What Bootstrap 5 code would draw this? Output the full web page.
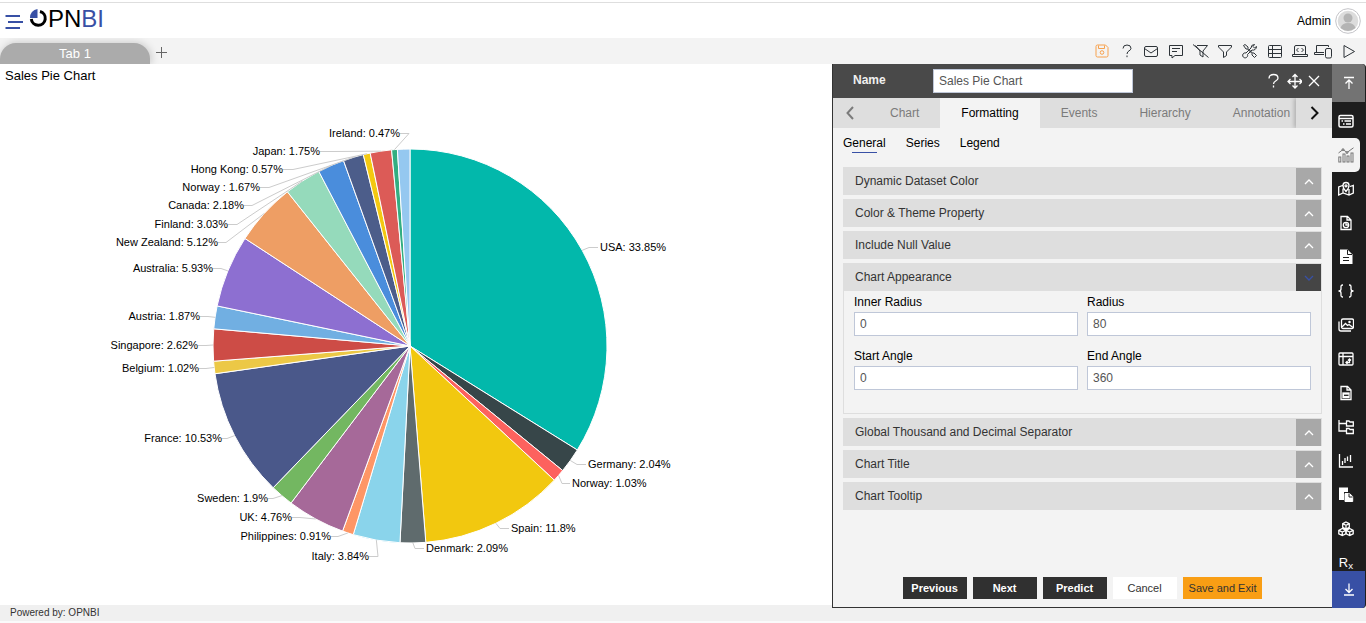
<!DOCTYPE html>
<html lang="en">
<head>
<meta charset="utf-8">
<meta name="viewport" content="width=device-width, initial-scale=1">
<title>OPNBI</title>
<link href="https://cdn.jsdelivr.net/npm/bootstrap@5.3.0/dist/css/bootstrap.min.css" rel="stylesheet">
<style>
  :root { --brand: #3850a5; --bar: #f3f3f3; --line: #dedede; --dark: #494949; --ink: #333; }
  body { font-family: "Liberation Sans", Arial, sans-serif; font-size: 12px; line-height: 18px; color: #000; background: #fafafa; }
  button, input { font: inherit; }
  svg.ico { width: 16px; height: 16px; fill: none; stroke: currentColor; stroke-width: 1; display: block; flex: none; }
  svg.bold-ico { stroke-width: 2; }
  svg.mid-ico { stroke-width: 1.3; }
  .plain { border: 0; background: none; padding: 0; color: inherit; }

  .app-header { height: 36px; border-top: 1px solid var(--line); margin-top: 2px; background: #fff; padding: 0 5px; }
  .top-strip { background: #fff; }
  .burger { color: var(--brand); margin: 0 6px 0 0; }
  .burger svg.ico { width: 18px; height: 16px; stroke-width: 2; }
  .brand { font-size: 24px; line-height: 24px; color: #000; text-decoration: none; margin-bottom: 4px; }
  .brand svg { width: 19px; height: 19px; }
  .brand span { color: var(--brand); }
  .avatar { width: 26px; height: 26px; }

  .tool-row { height: 26px; background: var(--bar); }
  .sheet-tab { width: 150px; height: 21px; border-radius: 16px 16px 0 0; background: #ababab; color: #fff; font-size: 13px; box-shadow: 1px 0 8px rgba(0,0,0,.2); }
  .sheet-tabs { overflow: hidden; padding-right: 20px; color: #666; }
  .tools { width: 263px; margin-right: 9px; color: #2d3338; }
  .tools .saving { color: #f7a14c; }

  .work-area { min-height: 0; }
  .chart-pane { background: #fff; min-width: 0; }
  .chart-pane h1 { font-size: 13px; line-height: 16px; margin: 0; padding: 4px 5px; }
  .chart-pane svg { font-size: 11px; margin-top: -24px; min-height: 0; }

  .editor { width: 500px; background: var(--bar); border: solid var(--ink); border-width: 0 0 1px 1px; margin-bottom: -3px; z-index: 1; }
  .editor-head { height: 34px; background: var(--dark); color: #fff; padding: 0 10px 0 20px; }
  .editor-head label { width: 80px; font-weight: bold; color: #f0f0f0; padding-bottom: 3px; }
  .field { height: 24px; border: 1px solid #bfc7d8; border-radius: 0; background: #fff; color: #555; padding: 0 5px; font-size: 12px; }
  .field-name { width: 200px; }

  .tab-strip { height: 30px; background: var(--line); color: #7b7b7b; }
  .tab-strip .arrow { width: 36px; flex: none; background: var(--line); }
  .tab-strip .next { color: #111; box-shadow: -2px 0 4px rgba(0,0,0,.2); z-index: 1; }
  .tab-strip a { color: inherit; text-decoration: none; padding: 0 21px; line-height: 30px; }
  .tab-strip a.active { background: var(--bar); color: #000; }
  .sub-nav { gap: 20px; padding: 6px 10px 13px; }
  .sub-nav a { color: #000; text-decoration: none; line-height: 18px; padding-bottom: 1px; }
  .sub-nav a.active::after { content: ""; display: block; height: 1px; width: 25px; margin: 0 auto; background: var(--brand); }

  .groups { gap: 4px; padding: 0 10px; }
  .group { border: 1px solid var(--line); border-bottom: 0; }
  .group.open { border-bottom: 1px solid var(--line); }
  .group-head { height: 27px; background: var(--line); color: var(--ink); padding-left: 11px; text-align: left; }
  .group-head span { padding-bottom: 2px; }
  .group-head i { width: 25px; background: #a8a8a8; color: #fff; }
  .open .group-head i { background: #454545; color: var(--brand); }
  .group-head svg.ico { width: 12px; height: 12px; stroke-width: 1.3; }
  .group-body { display: grid; grid-template-columns: 1fr 1fr; gap: 11px 9px; padding: 2px 10px 23px; }
  .group-body label { display: block; line-height: 18px; margin-bottom: 1px; }
  .actions { gap: 6px; padding-bottom: 8px; font-size: 11px; }
  .actions button { border: 0; height: 22px; min-width: 64px; padding: 0 6px; color: var(--ink); background: #fff; }
  .actions .step { background: #303030; color: #fff; font-weight: bold; }
  .actions .done { background: #f99e14; }

  .rail { width: 34px; background: #1e1e1e; color: #fff; margin-bottom: -3px; z-index: 1; border-radius: 0 4px 4px 0; overflow: hidden; border-right: 1px solid #1e1e1e; }
  .rail .up { height: 38px; background: #737373; margin-bottom: 2px; flex: none; }
  .rail .down { height: 37px; background: var(--brand); flex: none; }
  .rail-list { height: 0; overflow: hidden; }
  .rail-list button { width: 28px; height: 34px; flex: none; }
  .rail-list .active { background: var(--bar); color: #777; border-radius: 0 5px 5px 0; }
  .rail-list .rx { font-size: 13px; }
  .app-footer { height: 16px; background: #f0f0f0; color: #333; font-size: 10px; line-height: 15px; padding-left: 10px; margin-bottom: 2px; }
</style>
</head>
<body class="d-flex flex-column vh-100 overflow-hidden">
<div class="top-strip">
  <header class="app-header d-flex align-items-center">
    <button class="plain burger" aria-label="Menu"><svg class="ico" viewBox="0 0 18 16"><path d="M.5 3H15M3 9H18M.5 15H15"/></svg></button>
    <a class="brand d-flex align-items-center" href="#" aria-label="OPNBI">
      <svg viewBox="0 0 19 19" fill="none"><path d="M11 2.500A7 7 0 1 1 2.300 10" stroke="#000" stroke-width="3"/><path d="M8.500 0V9H1A8.500 8.500 0 0 1 8.500 0Z" fill="#3850a5"/></svg>PN<span>BI</span></a>
    <div class="ms-auto d-flex align-items-center gap-1">
      Admin
      <svg class="avatar" viewBox="0 0 26 26"><circle cx="13" cy="13" r="12.300" fill="#fff" stroke="#c4c4c8"/><circle cx="13" cy="13" r="10.300" fill="#dcdcdc"/><circle cx="13" cy="10" r="4.500" fill="#b4b4b4"/><path d="M5.500 20Q7 15 13 15T20.500 20Q13 26 5.500 20Z" fill="#b4b4b4"/></svg>
    </div>
  </header>
</div>

<div class="tool-row d-flex justify-content-between">
  <div class="sheet-tabs d-flex align-items-end">
    <button class="plain sheet-tab">Tab 1</button>
    <button class="plain ms-1 mb-1" aria-label="Add tab"><svg class="ico" viewBox="0 0 16 16"><path d="M7.500 3V14M2 8.500H13"/></svg></button>
  </div>
  <div class="tools d-flex justify-content-between align-items-center">
    <button class="plain saving" aria-label="Save"><svg class="ico" viewBox="0 0 16 16"><path d="M2 3.500Q2 2 3.500 2H11.500L14 4.500V12.500Q14 14 12.500 14H3.500Q2 14 2 12.500ZM4.500 2.500V5.500H10.500V2.500"/><circle cx="8" cy="9.500" r="1.800"/></svg></button>
    <button class="plain" aria-label="Help"><svg class="ico" viewBox="0 0 16 16"><path d="M4 5.500Q4 2 8 2T12 5.300C12 8 8 7.500 8 11M8 12.500V14.200"/></svg></button>
    <button class="plain" aria-label="Mail"><svg class="ico" viewBox="0 0 16 16"><rect x="1.500" y="3.500" width="13" height="10" rx="1.500"/><path d="M1.500 5.500L8 10L14.500 5.500"/></svg></button>
    <button class="plain" aria-label="Comments"><svg class="ico" viewBox="0 0 16 16"><path d="M1.500 2.500H14.500V12.500H7L4 15V12.500H1.500ZM4 5.500H12M4 8.500H9"/></svg></button>
    <button class="plain" aria-label="Clear filter"><svg class="ico" viewBox="0 0 16 16"><path d="M4 2.500H14.500L10 8V14L7 12V8L2.500 2.500M0 1.500L15.500 14.500"/></svg></button>
    <button class="plain" aria-label="Filter"><svg class="ico" viewBox="0 0 16 16"><path d="M1.500 2.500H14.500V4L9.500 9V12.500L6.500 14.500V9L1.500 4Z"/></svg></button>
    <button class="plain" aria-label="Tools"><svg class="ico" viewBox="0 0 16 16"><path d="M1.500 2.500L3 1.500L6 4V5.500L10.500 10H12L14.500 12.500L12.500 14.500L10 12V10.500L5.500 6H4ZM14.500 3.500A3.500 3.500 0 0 1 10 7L5.500 11.500A2.500 2.500 0 1 1 4 10L9 5A3.500 3.500 0 0 1 12.500 1.500L11 3.500L12.500 5Z"/></svg></button>
    <button class="plain" aria-label="Table"><svg class="ico" viewBox="0 0 16 16"><rect x="1.500" y="2.500" width="13" height="12" rx="1"/><path d="M1.500 6.500H14.500M1.500 10.500H14.500M5.500 2.500V14.500"/></svg></button>
    <button class="plain" aria-label="Code view"><svg class="ico" viewBox="0 0 16 16"><path d="M2.500 11V4Q2.500 2.500 4 2.500H12Q13.500 2.500 13.500 4V11M.5 11.500H15.500V13.500H.5ZM6.500 5L4.500 7L6.500 9M9.500 5L11.500 7L9.500 9"/></svg></button>
    <button class="plain overflow-visible" aria-label="Devices"><svg class="ico overflow-visible" viewBox="0 0 16 16"><path d="M.5 9.500V2.500H12.500V4M8 9.500H-1.500V11.500H8"/><rect x="9.500" y="5.500" width="6" height="9.500" rx="1.500"/></svg></button>
    <button class="plain" aria-label="Run"><svg class="ico" viewBox="0 0 16 16"><path d="M3 2.500L13.500 8.500L3 14.500Z"/></svg></button>
  </div>
</div>

<main class="work-area d-flex flex-grow-1">
  <section class="chart-pane flex-grow-1 d-flex flex-column">
    <h1>Sales Pie Chart</h1>
    <svg id="pie" class="flex-grow-1 w-100" viewBox="0 0 832 541" role="img" aria-label="Sales by country"></svg>
  </section>

  <section class="editor d-flex flex-column position-relative flex-shrink-0">
    <div class="editor-head d-flex align-items-center">
      <label for="objName">Name</label>
      <input id="objName" class="field field-name" value="Sales Pie Chart">
      <button class="plain ms-auto me-1" aria-label="Help"><svg class="ico mid-ico" viewBox="0 0 16 16"><path d="M3 5.500Q3 1.500 7.500 1.500T12 5.300C12 8 7.500 7.500 7.500 11M7.500 12.500V14.500"/></svg></button>
      <button class="plain me-1" aria-label="Move"><svg class="ico mid-ico" viewBox="0 0 16 16"><path d="M9 1.500V15M2 8.500H16M6.500 4L9 1.500L11.500 4M6.500 12.500L9 15L11.500 12.500M4.500 6L2 8.500L4.500 11M13.500 6L16 8.500L13.500 11"/></svg></button>
      <button class="plain" aria-label="Close"><svg class="ico mid-ico" viewBox="0 0 16 16"><path d="M3 3L13 13M13 3L3 13"/></svg></button>
    </div>
    <nav class="tab-strip d-flex overflow-hidden">
      <button class="plain arrow d-flex align-items-center ps-2" aria-label="Previous tabs"><svg class="ico bold-ico" viewBox="0 0 16 16"><path d="M12 2L6.500 8L12 14"/></svg></button>
      <div class="d-flex flex-grow-1 overflow-hidden">
        <a href="#">Chart</a><a href="#" class="active">Formatting</a><a href="#">Events</a><a href="#">Hierarchy</a><a href="#">Annotation</a>
      </div>
      <button class="plain arrow next position-relative d-flex align-items-center justify-content-center" aria-label="Next tabs"><svg class="ico bold-ico" viewBox="0 0 16 16"><path d="M5.500 2L11.500 8L5.500 14"/></svg></button>
    </nav>
    <nav class="sub-nav d-flex">
      <a href="#" class="active">General</a><a href="#">Series</a><a href="#">Legend</a>
    </nav>
    <div class="groups d-flex flex-column">
      <div class="group"><button class="plain group-head w-100 d-flex"><span class="flex-grow-1 align-self-center">Dynamic Dataset Color</span><i class="d-flex align-items-center justify-content-center align-self-stretch"><svg class="ico" viewBox="0 0 12 12"><path d="M2 8L6 4L10 8"/></svg></i></button></div>
      <div class="group"><button class="plain group-head w-100 d-flex"><span class="flex-grow-1 align-self-center">Color &amp; Theme Property</span><i class="d-flex align-items-center justify-content-center align-self-stretch"><svg class="ico" viewBox="0 0 12 12"><path d="M2 8L6 4L10 8"/></svg></i></button></div>
      <div class="group"><button class="plain group-head w-100 d-flex"><span class="flex-grow-1 align-self-center">Include Null Value</span><i class="d-flex align-items-center justify-content-center align-self-stretch"><svg class="ico" viewBox="0 0 12 12"><path d="M2 8L6 4L10 8"/></svg></i></button></div>
      <div class="group open"><button class="plain group-head w-100 d-flex"><span class="flex-grow-1 align-self-center">Chart Appearance</span><i class="d-flex align-items-center justify-content-center align-self-stretch"><svg class="ico" viewBox="0 0 12 12"><path d="M2 4L6 8L10 4"/></svg></i></button>
        <div class="group-body">
          <div><label for="inner">Inner Radius</label><input id="inner" class="field w-100 d-block" value="0"></div>
          <div><label for="radius">Radius</label><input id="radius" class="field w-100 d-block" value="80"></div>
          <div><label for="start">Start Angle</label><input id="start" class="field w-100 d-block" value="0"></div>
          <div><label for="end">End Angle</label><input id="end" class="field w-100 d-block" value="360"></div>
        </div>
      </div>
      <div class="group"><button class="plain group-head w-100 d-flex"><span class="flex-grow-1 align-self-center">Global Thousand and Decimal Separator</span><i class="d-flex align-items-center justify-content-center align-self-stretch"><svg class="ico" viewBox="0 0 12 12"><path d="M2 8L6 4L10 8"/></svg></i></button></div>
      <div class="group"><button class="plain group-head w-100 d-flex"><span class="flex-grow-1 align-self-center">Chart Title</span><i class="d-flex align-items-center justify-content-center align-self-stretch"><svg class="ico" viewBox="0 0 12 12"><path d="M2 8L6 4L10 8"/></svg></i></button></div>
      <div class="group"><button class="plain group-head w-100 d-flex"><span class="flex-grow-1 align-self-center">Chart Tooltip</span><i class="d-flex align-items-center justify-content-center align-self-stretch"><svg class="ico" viewBox="0 0 12 12"><path d="M2 8L6 4L10 8"/></svg></i></button></div>
    </div>
    <div class="actions d-flex justify-content-center mt-auto">
      <button class="step">Previous</button><button class="step">Next</button><button class="step">Predict</button><button>Cancel</button><button class="done">Save and Exit</button>
    </div>
  </section>

  <aside class="rail d-flex flex-column position-relative flex-shrink-0">
    <button class="plain up d-flex align-items-center justify-content-center" aria-label="Scroll up"><svg class="ico mid-ico" viewBox="0 0 16 16"><path d="M3 2.500H13M8 14V5M4.500 8.500L8 5L11.500 8.500"/></svg></button>
    <div class="rail-list flex-grow-1 d-flex flex-column">
      <button class="plain d-flex align-items-center justify-content-center" aria-label="Form"><svg class="ico" viewBox="0 0 16 16"><rect x="1" y="2.500" width="14" height="11.500" rx="1.500" stroke-width="1.500"/><path d="M1 5.500H15M3.500 8H5M6.500 8H13M5 11H6.500M8 11H13" stroke-width="1.300"/></svg></button>
      <button class="plain active d-flex align-items-center justify-content-center" aria-label="Charts"><svg class="ico" viewBox="0 0 16 16"><path d="M.5 6L5 2.500L9 5.500L15.500 .8"/><circle cx="5" cy="2.700" r="1"/><circle cx="9" cy="5.500" r="1"/><rect x=".8" y="10" width="2" height="5"/><rect x="5" y="7" width="2" height="8"/><rect x="9" y="9" width="2" height="6"/><rect x="13" y="6" width="2" height="9"/></svg></button>
      <button class="plain d-flex align-items-center justify-content-center" aria-label="Map"><svg class="ico mid-ico" viewBox="0 0 16 16"><path d="M4.500 4.500L.7 6V14L5 12L11 14L15.300 12V4.500L12 5.500M5 7.500V12M11 8V14M8 10.500C3.500 5.500 4.500 1.500 8 1.500S12.500 5.500 8 10.500Z"/><circle cx="8" cy="4.800" r="1"/></svg></button>
      <button class="plain d-flex align-items-center justify-content-center" aria-label="Report"><svg class="ico mid-ico" viewBox="0 0 16 16"><path d="M3 1.500H9.500L13 5V14.500H3ZM9 1.500V5H13M8 7V10H10.500"/><circle cx="8" cy="10" r="2.700"/></svg></button>
      <button class="plain d-flex align-items-center justify-content-center" aria-label="Document"><svg class="ico" viewBox="0 0 16 16"><path d="M2 .5H9.500L14.500 5.500V15H2Z" fill="#fff" stroke="none"/><path d="M9.500 1V5.500H14M5 8.500H11M5 11.500H11" stroke="#1e1e1e"/></svg></button>
      <button class="plain d-flex align-items-center justify-content-center" aria-label="Script"><svg class="ico mid-ico" viewBox="0 0 16 16"><path d="M5 2H4.500Q3 2 3 3.500V6Q3 8 .5 8Q3 8 3 10V12.500Q3 14 4.500 14H5M11 2H11.500Q13 2 13 3.500V6Q13 8 15.500 8Q13 8 13 10V12.500Q13 14 11.500 14H11"/></svg></button>
      <button class="plain d-flex align-items-center justify-content-center" aria-label="Images"><svg class="ico mid-ico" viewBox="0 0 16 16"><rect x="3.500" y="2" width="12" height="9.500" rx="1.500"/><path d="M1 4.500V12Q1 14 3 14H13M4 10L7.500 6.500L9.500 8.500L11 7.500L15 10.500"/><circle cx="11.500" cy="5" r=".6"/></svg></button>
      <button class="plain d-flex align-items-center justify-content-center" aria-label="Pivot"><svg class="ico mid-ico" viewBox="0 0 16 16"><rect x="1" y="2" width="14" height="12" rx="1"/><path d="M1 5.500H15M5 2V14M8.500 11.500H11.500V8.500M10 9.500L11.500 8L13 9.500M9.500 10L8 11.500L9.500 13"/></svg></button>
      <button class="plain d-flex align-items-center justify-content-center" aria-label="Data file"><svg class="ico mid-ico" viewBox="0 0 16 16"><path d="M3 1.500H9.500L13 5V14.500H3ZM9 1.500V5H13"/><rect x="5" y="8" width="6" height="4.500" fill="#fff"/><path d="M6 10.300H10.500" stroke="#1e1e1e"/></svg></button>
      <button class="plain d-flex align-items-center justify-content-center" aria-label="Folders"><svg class="ico mid-ico" viewBox="0 0 16 16"><path d="M1 1V12H8M1 4.500H8M8.500 2H11L12 3H15.300V7H8.500ZM8.500 9.500H11L12 10.500H15.300V14.500H8.500Z"/></svg></button>
      <button class="plain d-flex align-items-center justify-content-center" aria-label="Stock chart"><svg class="ico mid-ico" viewBox="0 0 16 16"><path d="M1.500 1V14H15M4.500 8V12M7 5V10M9.500 3.500V8M12.500 2V9"/></svg></button>
      <button class="plain d-flex align-items-center justify-content-center" aria-label="Copy"><svg class="ico" viewBox="0 0 16 16"><path d="M1 .5H10V5H6V13H1Z" fill="#fff" stroke="none"/><path d="M7 6.500H11.500L14.700 9.500V14.500H7Z" fill="#fff"/><path d="M11 6.500V10H14.500" stroke="#1e1e1e"/></svg></button>
      <button class="plain d-flex align-items-center justify-content-center" aria-label="Models"><svg class="ico mid-ico" viewBox="0 0 16 16"><path d="M8 1L11.300 2.700V6.300L8 8L4.700 6.300V2.700ZM4.700 2.700L8 4.300L11.300 2.700M8 4.300V8M4.300 7.500L7.800 9.300V12.800L4.300 14.500L.8 12.800V9.300ZM.8 9.300L4.300 11L7.800 9.300M4.300 11V14.500M11.700 7.500L15.200 9.300V12.800L11.700 14.500L8.200 12.800V9.300ZM8.200 9.300L11.700 11L15.200 9.300M11.700 11V14.500"/></svg></button>
      <button class="plain rx">R<sub>x</sub></button>
    </div>
    <button class="plain down d-flex align-items-center justify-content-center" aria-label="Scroll down"><svg class="ico mid-ico" viewBox="0 0 16 16"><path d="M3 13H13M8 1.500V10.500M4.500 7L8 10.500L11.500 7"/></svg></button>
  </aside>
</main>
<footer class="app-footer">Powered by: OPNBI</footer>

<script src="https://cdn.jsdelivr.net/npm/bootstrap@5.3.0/dist/js/bootstrap.bundle.min.js"></script>
<script>
  // name, percent, colour, label x, label y, elbow x of the leader line
  const slices = [
    ['USA', 33.85, '#02b8ab', 600, 183, 589], ['Germany', 2.04, '#374649', 588, 400, 577],
    ['Norway', 1.03, '#fd625e', 572, 419, 562], ['Spain', 11.8, '#f2c80f', 511, 464, 500],
    ['Denmark', 2.09, '#5f6b6d', 426, 484, 415], ['Italy', 3.84, '#8ad4eb', 369, 492, 378],
    ['Philippines', 0.91, '#fe9666', 331, 472, 338], ['UK', 4.76, '#a66999', 292, 453, 300],
    ['Sweden', 1.9, '#73b761', 268, 434, 273], ['France', 10.53, '#4a588a', 222, 374, 227],
    ['Belgium', 1.02, '#ecc846', 199, 304, 206], ['Singapore', 2.62, '#cd4c46', 198, 281, 206],
    ['Austria', 1.87, '#71afe2', 200, 252, 208], ['Australia', 5.93, '#8d6fd1', 213, 204, 221],
    ['New Zealand', 5.12, '#ee9e64', 218, 178, 226], ['Finland', 3.03, '#95dabb', 228, 160, 237],
    ['Canada', 2.18, '#4a8ddc', 244, 141, 252], ['Norway ', 1.67, '#4c5d8a', 260, 123, 269],
    ['Hong Kong', 0.57, '#f3c911', 283, 105, 293], ['Japan', 1.75, '#dc5b57', 320, 87, 334],
    ['Ireland', 0.47, '#33ae81', 400, 69, 409], ['', 1.02, '#95c8f0']
  ];
  const cx = 410, cy = 282, r = 197;
  const at = p => { const a = p / 100 * 2 * Math.PI; return [cx + r * Math.sin(a), cy - r * Math.cos(a)]; };
  let sum = 0, pies = '', labels = '';
  for (const [name, pct, color, x, y, elbow] of slices) {
    const a = at(sum), b = at(sum + pct), m = at(sum + pct / 2);
    pies += `<path d="M${cx} ${cy}L${a}A${r} ${r} 0 0 1 ${b}Z" fill="${color}" stroke="#fff"/>`;
    if (name) {
      const right = x > cx;
      labels += `<path d="M${m}L${elbow} ${y + .5}H${right ? x - 2 : x}" fill="none" stroke="#ccc"/>` +
        `<text x="${x}" y="${y + 4}" text-anchor="${right ? 'start' : 'end'}">${name}: ${pct}%</text>`;
    }
    sum += pct;
  }
  document.getElementById('pie').innerHTML = pies + labels;
</script>
</body>
</html>
